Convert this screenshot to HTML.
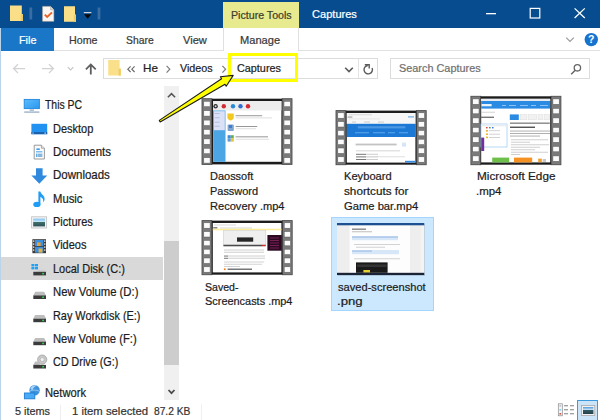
<!DOCTYPE html>
<html><head><meta charset="utf-8">
<style>
*{margin:0;padding:0;box-sizing:border-box}
html,body{width:600px;height:420px;overflow:hidden;background:#fff}
body{position:relative;font-family:"Liberation Sans",sans-serif;font-size:12.4px;color:#1a1a1a}
.a{position:absolute}
.t{position:absolute;white-space:nowrap;line-height:14px;height:14px;transform-origin:0 0;-webkit-text-stroke:.22px currentColor}
svg{position:absolute;overflow:visible}
</style></head><body>
<!-- title bar -->
<div class="a" style="left:0;top:0;width:600px;height:28px;background:#074c8f"></div>
<div class="a" style="left:223px;top:2.4px;width:76px;height:26px;background:#e7ea8e"></div>
<!-- ribbon tab row -->
<div class="a" style="left:0;top:28px;width:600px;height:23px;background:#fff;border-bottom:1px solid #e2e2e2"></div>
<div class="a" style="left:0;top:28px;width:54.4px;height:23.4px;background:#1a77c8"></div>
<div class="a" style="left:223px;top:28px;width:76px;height:23px;background:#fff;border-left:1px solid #e0e0e0;border-right:1px solid #e0e0e0"></div>
<!-- window side borders -->
<div class="a" style="left:0;top:28px;width:1px;height:392px;background:#b9d4ea"></div>

<svg style="left:0;top:0" width="600" height="28" viewBox="0 0 600 28">
 <!-- folder 1 -->
 <path d="M10 5.6H21.8V14H22.8V21H10Z" fill="#fbdf88"/>
 <path d="M20.6 14.4H22.8V21H20.6Z" fill="#efcb66"/>
 <rect x="29.4" y="7.5" width="2.8" height="12" fill="#3b6da3"/>
 <!-- doc -->
 <path d="M42.6 6.4H50.6L53.8 9.8V21.3H42.6Z" fill="#faf6f1" stroke="#d9b9a0" stroke-width=".5"/>
 <path d="M50.6 6.4V9.8H53.8" fill="#d8d8d8" stroke="#999" stroke-width=".5"/>
 <path d="M44.8 14.6L47.2 17L52 12.4" fill="none" stroke="#e8632b" stroke-width="1.9"/>
 <!-- folder 2 -->
 <path d="M64 6.2H75V14.6H76V21.8H64Z" fill="#fbdf88"/>
 <path d="M73.8 15H76V21.8H73.8Z" fill="#efcb66"/>
 <!-- dropdown -->
 <rect x="83.8" y="12" width="7.6" height="1.2" fill="#c9d3de"/>
 <path d="M84 14.2H91.4L87.7 18.8Z" fill="#0a0a0a"/>
 <rect x="97.6" y="7.5" width="2.8" height="12" fill="#3b6da3"/>
 <!-- window controls -->
 <rect x="486" y="13" width="10" height="1.3" fill="#fff"/>
 <rect x="530.2" y="8.4" width="9.6" height="9.6" fill="none" stroke="#fff" stroke-width="1.2"/>
 <path d="M574.6 8.4L584.8 18M584.8 8.4L574.6 18" stroke="#fff" stroke-width="1.3" fill="none"/>
</svg>
<svg style="left:560px;top:30px" width="40" height="20" viewBox="560 30 40 20">
 <path d="M566.2 37.6L570 41.4L573.8 37.6" fill="none" stroke="#9a9a9a" stroke-width="1.2"/>
 <circle cx="591.3" cy="39.6" r="6.7" fill="#1873cf"/>
 <text x="591.3" y="43.4" text-anchor="middle" font-family="Liberation Sans, sans-serif" font-weight="bold" font-size="10.5" fill="#fff">?</text>
</svg>

<!-- address bar -->
<div class="a" style="left:103px;top:58px;width:275px;height:21px;border:1px solid #dcdcdc;background:#fff"></div>
<div class="a" style="left:358.2px;top:58px;width:1px;height:20px;background:#e3e3e3"></div>
<div class="a" style="left:389.6px;top:58px;width:200.6px;height:21px;border:1px solid #dcdcdc;background:#fff"></div>

<svg style="left:0;top:52px" width="600" height="34" viewBox="0 52 600 34">
 <!-- back -->
 <path d="M25 68.6H13.6M18 64.2L13.6 68.6L18 73" fill="none" stroke="#d2d2d2" stroke-width="1.3"/>
 <!-- fwd -->
 <path d="M42 68.6H53.4M49 64.2L53.4 68.6L49 73" fill="none" stroke="#d2d2d2" stroke-width="1.3"/>
 <!-- small chevron -->
 <path d="M67.8 67.2L70.6 70L73.4 67.2" fill="none" stroke="#c4c4c4" stroke-width="1.1"/>
 <!-- up -->
 <path d="M90.8 74.4V64.6M85.9 69.3L90.8 64.4L95.7 69.3" fill="none" stroke="#5e5e5e" stroke-width="1.8"/>
 <!-- folder in address -->
 <path d="M108.2 60H119.6V68.4H120.8V75.6H108.2Z" fill="#fbe08c"/>
 <path d="M118.6 68.8H120.8V75.6H118.6Z" fill="#efcb66"/>
 <!-- « -->
 <path d="M130.6 66.4L127.8 69.2L130.6 72M134.6 66.4L131.8 69.2L134.6 72" fill="none" stroke="#666" stroke-width="1.1"/>
 <!-- > -->
 <path d="M166.6 65.8L169.8 69.2L166.6 72.6" fill="none" stroke="#7a7a7a" stroke-width="1.2"/>
 <path d="M222.4 65.8L225.6 69.2L222.4 72.6" fill="none" stroke="#7a7a7a" stroke-width="1.2"/>
 <!-- dropdown chevron -->
 <path d="M345.2 67.8L349 71.6L352.8 67.8" fill="none" stroke="#5a5a5a" stroke-width="1.6"/>
 <!-- refresh -->
 <path d="M367.8 65.5A4.2 4.2 0 1 0 372.1 68" fill="none" stroke="#5a5a5a" stroke-width="1.4"/>
 <path d="M364.8 64.8H369.2V68.4" fill="none" stroke="#5a5a5a" stroke-width="1.4"/>
 <!-- search -->
 <circle cx="577.4" cy="67.8" r="3.2" fill="none" stroke="#666" stroke-width="1.3"/>
 <path d="M575.2 70.2L571.2 74.2" stroke="#666" stroke-width="1.5"/>
</svg>

<!-- nav pane -->
<div class="a" style="left:1px;top:257px;width:162px;height:23.4px;background:#d9d9d9"></div>
<div class="a" style="left:164px;top:86px;width:15.3px;height:313.6px;background:#f0f0f0"></div>
<div class="a" style="left:164px;top:241px;width:15.3px;height:123.6px;background:#cdcdcd"></div>

<svg style="left:0;top:90px" width="60" height="320" viewBox="0 90 60 320">
 <defs>
  <linearGradient id="gm" x1="0" y1="0" x2="1" y2="1"><stop offset="0" stop-color="#5cbcff"/><stop offset="1" stop-color="#2a97ee"/></linearGradient>
  <linearGradient id="gp" x1="0" y1="0" x2="0" y2="1"><stop offset="0" stop-color="#7cc4f5"/><stop offset=".45" stop-color="#cfe7f5"/><stop offset=".5" stop-color="#3f6d68"/><stop offset="1" stop-color="#2e5058"/></linearGradient>
 </defs>
 <!-- This PC -->
 <rect x="24.2" y="99.4" width="15.2" height="9.2" fill="url(#gm)" stroke="#2487dc" stroke-width=".9"/>
 <rect x="29.6" y="109.2" width="4.4" height="1.8" fill="#b5c3d0"/>
 <rect x="24.2" y="111.4" width="15.2" height="1.4" fill="#9db3c8"/>
 <!-- Desktop -->
 <rect x="31.4" y="123.8" width="15.8" height="10.4" fill="#2292f2"/>
 <rect x="31.4" y="132" width="15.8" height="2.2" fill="#1b62ad"/>
 <rect x="32.4" y="132.6" width="1.2" height="1" fill="#d8e8f8"/><rect x="44.4" y="132.6" width="1.6" height="1" fill="#d8e8f8"/>
 <!-- Documents -->
 <path d="M34.2 145.2H41.4L44.4 148.2V159H34.2Z" fill="#fcfcfc" stroke="#8f8f8f" stroke-width=".9"/>
 <path d="M41.4 145.2V148.2H44.4" fill="#e4e4e4" stroke="#8f8f8f" stroke-width=".7"/>
 <rect x="36.4" y="148.4" width="3.4" height="1.6" fill="#3e9be6"/>
 <rect x="36" y="151.2" width="6.4" height="1.2" fill="#5aaef0"/>
 <rect x="37.4" y="153.6" width="5" height="3.4" fill="#8ab6d8"/>
 <rect x="36" y="153.6" width="1" height="3.4" fill="#5aaef0"/>
 <!-- Downloads -->
 <path d="M36 168.2H42.6V175.6H47.2L39.3 183.8L31.4 175.6H36Z" fill="#2f89dd"/>
 <!-- Music -->
 <path d="M38.4 191.6H40.4C40.8 194.4 44.8 195.6 44.6 199.2C44.5 200.6 43.8 201.6 43 202.2C43.6 200.4 43.2 198.2 40.4 196.8V204.4H38.4Z" fill="#1f9cf5"/>
 <ellipse cx="36.9" cy="204.4" rx="3.6" ry="2.7" fill="#1f9cf5"/>
 <!-- Pictures -->
 <rect x="31.6" y="216.8" width="15" height="11.2" fill="#f4f4f4" stroke="#c4c4c4" stroke-width=".9"/>
 <rect x="33.2" y="218.6" width="11.8" height="7.8" fill="url(#gp)"/>
 <!-- Videos -->
 <rect x="32.4" y="239.2" width="13.6" height="14" fill="#3a3a3a"/>
 <rect x="35" y="240" width="8.4" height="6" fill="#3b8fe0"/>
 <rect x="35" y="246.8" width="8.4" height="5.8" fill="#3b8fe0"/>
 <rect x="37" y="242.4" width="3.6" height="3.6" fill="#f0a030"/>
 <rect x="38.6" y="248.6" width="3.8" height="4" fill="#e8b040"/>
 <g fill="#e8e8e8"><rect x="33" y="240.4" width="1.3" height="1.4"/><rect x="33" y="243.4" width="1.3" height="1.4"/><rect x="33" y="246.4" width="1.3" height="1.4"/><rect x="33" y="249.4" width="1.3" height="1.4"/>
 <rect x="44.1" y="240.4" width="1.3" height="1.4"/><rect x="44.1" y="243.4" width="1.3" height="1.4"/><rect x="44.1" y="246.4" width="1.3" height="1.4"/><rect x="44.1" y="249.4" width="1.3" height="1.4"/></g>
 <!-- Local disk -->
 <g fill="#1fa2f6"><rect x="31.4" y="264" width="3" height="2.4"/><rect x="35" y="264" width="3" height="2.4"/><rect x="31.4" y="267" width="3" height="2.4"/><rect x="35" y="267" width="3" height="2.4"/></g>
 <path d="M38.6 269.8H44.4L46 271.8H36Z" fill="#cfcfcf"/>
 <rect x="33.3" y="271.8" width="12.7" height="3.6" fill="#3b3b3b"/>
 <rect x="42.2" y="272.9" width="1.8" height="1.5" fill="#35d04a"/>

 <path d="M35.2 291.79999999999995H44.2L46 295.4H33.3Z" fill="#bdbdbd"/>
 <rect x="33.3" y="295.4" width="12.7" height="3.6" fill="#3b3b3b"/>
 <rect x="42.2" y="296.5" width="1.8" height="1.5" fill="#35d04a"/>
 <path d="M35.2 315.0H44.2L46 318.6H33.3Z" fill="#bdbdbd"/>
 <rect x="33.3" y="318.6" width="12.7" height="3.6" fill="#3b3b3b"/>
 <rect x="42.2" y="319.70000000000005" width="1.8" height="1.5" fill="#35d04a"/>
 <path d="M35.2 338.0H44.2L46 341.6H33.3Z" fill="#bdbdbd"/>
 <rect x="33.3" y="341.6" width="12.7" height="3.6" fill="#3b3b3b"/>
 <rect x="42.2" y="342.70000000000005" width="1.8" height="1.5" fill="#35d04a"/>
 <!-- CD -->
 <circle cx="42.2" cy="359.6" r="4.6" fill="#c9c9c9" stroke="#9a9a9a" stroke-width=".7"/>
 <circle cx="42.2" cy="359.6" r="2" fill="#f2f2f2" stroke="#a8a8a8" stroke-width=".6"/>
 <path d="M35.2 361.6H39L40 364.9H33.3Z" fill="#bdbdbd"/>
 <rect x="33.3" y="364.9" width="12.7" height="3.6" fill="#3b3b3b"/>
 <rect x="42.2" y="366" width="1.8" height="1.5" fill="#35d04a"/>
 <!-- Network -->
 <circle cx="34.6" cy="390.2" r="5.2" fill="#3f93dc"/>
 <path d="M30.4 388.4A5.2 5.2 0 0 1 37 385.6C35 386.4 33 388 32.4 390.4Z" fill="#a8d4f6"/>
 <path d="M30 391C33 389.6 36.6 389.8 39.6 391.4" stroke="#9fd0f6" stroke-width=".8" fill="none"/>
 <rect x="24.4" y="393" width="10.4" height="5.8" fill="#49aaf5" stroke="#1f7ed2" stroke-width=".9"/>
</svg>
<!-- scroll chevrons -->
<svg style="left:164px;top:86px" width="16" height="314" viewBox="164 86 16 314">
 <path d="M167.9 97.2L171.5 93.6L175.1 97.2" fill="none" stroke="#555" stroke-width="1.6"/>
 <path d="M168.5 390L171.5 393.2L174.5 390" fill="none" stroke="#4a4a4a" stroke-width="1.7"/>
</svg>

<!-- status -->
<div class="a" style="left:60.4px;top:405px;width:1px;height:15px;background:#eeeeee"></div>
<div class="a" style="left:201px;top:404px;width:1px;height:16px;background:#f0f0f0"></div>

<div class="a" style="left:576.6px;top:399.6px;width:21.6px;height:21px;background:#cce4f7;border:1px solid #3c9bdc"></div>
<svg style="left:555px;top:400px" width="45" height="20" viewBox="555 400 45 20">
 <defs><linearGradient id="gv" x1="0" y1="0" x2="0" y2="1"><stop offset="0" stop-color="#4d9ae0"/><stop offset=".4" stop-color="#cfe3f2"/><stop offset=".5" stop-color="#2f5a62"/><stop offset="1" stop-color="#23404a"/></linearGradient></defs>
 <rect x="558.3" y="403.8" width="4" height="12" fill="#f6f6f6" stroke="#8a8a8a" stroke-width=".7"/>
 <rect x="559.4" y="405" width="1.8" height="1.6" fill="#b8c4d0"/><rect x="559.4" y="409" width="1.8" height="1.6" fill="#8ad0f5"/><rect x="559.4" y="413" width="1.8" height="1.6" fill="#e05050"/>
 <g fill="#8c8c8c"><rect x="564" y="405.2" width="4" height="1.1"/><rect x="570" y="405.2" width="4" height="1.1"/><rect x="564" y="409.2" width="4" height="1.1"/><rect x="570" y="409.2" width="4" height="1.1"/><rect x="564" y="413.2" width="4" height="1.1"/><rect x="570" y="413.2" width="4" height="1.1"/></g>
 <rect x="581.6" y="405.6" width="13.2" height="9.8" fill="#f2f2f2" stroke="#a0a0a0" stroke-width=".7"/>
 <rect x="583" y="407" width="10.4" height="7" fill="url(#gv)"/>
</svg>

<!-- files -->
<div class="a" style="left:331px;top:217px;width:103px;height:94px;background:#cce8ff;border:1px solid #a3d5ff"></div>
<svg style="left:0;top:0" width="600" height="420" viewBox="0 0 600 420"><rect x="202.0" y="98.7" width="9.8" height="65.7" fill="#7a7a7a"/>
<rect x="202.0" y="98.7" width="9.8" height="65.7" fill="none" stroke="#4d4d4d" stroke-width=".9"/>
<rect x="203.8" y="101.3" width="6.3" height="5.4" fill="#fbfbfb" stroke="#5a5a5a" stroke-width=".5"/>
<rect x="203.8" y="110.7" width="6.3" height="5.4" fill="#fbfbfb" stroke="#5a5a5a" stroke-width=".5"/>
<rect x="203.8" y="120.1" width="6.3" height="5.4" fill="#fbfbfb" stroke="#5a5a5a" stroke-width=".5"/>
<rect x="203.8" y="129.5" width="6.3" height="5.4" fill="#fbfbfb" stroke="#5a5a5a" stroke-width=".5"/>
<rect x="203.8" y="138.9" width="6.3" height="5.4" fill="#fbfbfb" stroke="#5a5a5a" stroke-width=".5"/>
<rect x="203.8" y="148.3" width="6.3" height="5.4" fill="#fbfbfb" stroke="#5a5a5a" stroke-width=".5"/>
<rect x="203.8" y="157.7" width="6.3" height="5.4" fill="#fbfbfb" stroke="#5a5a5a" stroke-width=".5"/>
<rect x="282.2" y="98.7" width="9.8" height="65.7" fill="#7a7a7a"/>
<rect x="282.2" y="98.7" width="9.8" height="65.7" fill="none" stroke="#4d4d4d" stroke-width=".9"/>
<rect x="284.0" y="101.3" width="6.3" height="5.4" fill="#fbfbfb" stroke="#5a5a5a" stroke-width=".5"/>
<rect x="284.0" y="110.7" width="6.3" height="5.4" fill="#fbfbfb" stroke="#5a5a5a" stroke-width=".5"/>
<rect x="284.0" y="120.1" width="6.3" height="5.4" fill="#fbfbfb" stroke="#5a5a5a" stroke-width=".5"/>
<rect x="284.0" y="129.5" width="6.3" height="5.4" fill="#fbfbfb" stroke="#5a5a5a" stroke-width=".5"/>
<rect x="284.0" y="138.9" width="6.3" height="5.4" fill="#fbfbfb" stroke="#5a5a5a" stroke-width=".5"/>
<rect x="284.0" y="148.3" width="6.3" height="5.4" fill="#fbfbfb" stroke="#5a5a5a" stroke-width=".5"/>
<rect x="284.0" y="157.7" width="6.3" height="5.4" fill="#fbfbfb" stroke="#5a5a5a" stroke-width=".5"/>
<rect x="211.8" y="98.7" width="70.4" height="65.7" fill="#1c1c1c"/>
<rect x="213.2" y="101" width="68.2" height="60.8" fill="#fff"/>
<rect x="213.2" y="101" width="68.2" height="9.5" fill="#ededed"/>
<circle cx="215.6" cy="106.2" r="2.2" fill="#2c2c2c"/>
<circle cx="223.8" cy="106.2" r="2.2" fill="#d42a36"/>
<circle cx="233" cy="106.2" r="2.2" fill="#2b8ad6"/>
<circle cx="240.5" cy="106.2" r="2.2" fill="#2d6fd2"/>
<circle cx="248" cy="106.2" r="2.2" fill="#d42a36"/>
<circle cx="215.6" cy="106.2" r="1" fill="#d8d8d8"/>
<rect x="213.2" y="110.5" width="12.3" height="51.3" fill="#4ba6e3"/>
<rect x="214" y="111.2" width="10.8" height="19" fill="#dbe1f6"/>
<rect x="214.6" y="113" width="5.0" height="0.8" fill="#a4b6dc"/>
<rect x="214.6" y="117.4" width="5.0" height="0.8" fill="#a4b6dc"/>
<rect x="214.6" y="121.8" width="5.0" height="0.8" fill="#a4b6dc"/>
<rect x="214.6" y="125.8" width="5.0" height="0.8" fill="#a4b6dc"/>
<path d="M227.4 113.4H233.8V117.4C233.8 119.2 231.8 120.2 230.6 120.4C229.4 120.2 227.4 119.2 227.4 117.4Z" fill="#f2c824"/>
<rect x="235.6" y="115.3" width="26.6" height="0.9" fill="#8c8c8c"/>
<rect x="235.6" y="117.5" width="36.4" height="0.8" fill="#d6d6d6"/>
<rect x="227.6" y="124.4" width="6.2" height="6.6" rx="1" fill="#7fa4cf"/>
<rect x="229" y="125" width="3" height="3" fill="#3f7fd0"/>
<rect x="235.6" y="126.1" width="21.6" height="0.9" fill="#8c8c8c"/>
<rect x="235.6" y="128.4" width="20.4" height="0.8" fill="#d6d6d6"/>
<rect x="227.6" y="135.2" width="3.2" height="3.2" fill="#3f8ade"/><rect x="230.8" y="135.2" width="3" height="3.2" fill="#6ab04a"/><rect x="227.6" y="138.4" width="3.2" height="3.2" fill="#5a9ad8"/><rect x="230.8" y="138.4" width="3" height="3.2" fill="#eac232"/>
<rect x="235.6" y="136.4" width="32.4" height="0.9" fill="#8c8c8c"/>
<rect x="235.6" y="138.8" width="33.4" height="0.8" fill="#d6d6d6"/>
<rect x="336.0" y="110.6" width="9.8" height="54.1" fill="#7a7a7a"/>
<rect x="336.0" y="110.6" width="9.8" height="54.1" fill="none" stroke="#4d4d4d" stroke-width=".9"/>
<rect x="337.8" y="112.8" width="6.3" height="5.4" fill="#fbfbfb" stroke="#5a5a5a" stroke-width=".5"/>
<rect x="337.8" y="121.6" width="6.3" height="5.4" fill="#fbfbfb" stroke="#5a5a5a" stroke-width=".5"/>
<rect x="337.8" y="130.4" width="6.3" height="5.4" fill="#fbfbfb" stroke="#5a5a5a" stroke-width=".5"/>
<rect x="337.8" y="139.2" width="6.3" height="5.4" fill="#fbfbfb" stroke="#5a5a5a" stroke-width=".5"/>
<rect x="337.8" y="148.0" width="6.3" height="5.4" fill="#fbfbfb" stroke="#5a5a5a" stroke-width=".5"/>
<rect x="337.8" y="156.8" width="6.3" height="5.4" fill="#fbfbfb" stroke="#5a5a5a" stroke-width=".5"/>
<rect x="416.4" y="110.6" width="9.8" height="54.1" fill="#7a7a7a"/>
<rect x="416.4" y="110.6" width="9.8" height="54.1" fill="none" stroke="#4d4d4d" stroke-width=".9"/>
<rect x="418.2" y="112.8" width="6.3" height="5.4" fill="#fbfbfb" stroke="#5a5a5a" stroke-width=".5"/>
<rect x="418.2" y="121.6" width="6.3" height="5.4" fill="#fbfbfb" stroke="#5a5a5a" stroke-width=".5"/>
<rect x="418.2" y="130.4" width="6.3" height="5.4" fill="#fbfbfb" stroke="#5a5a5a" stroke-width=".5"/>
<rect x="418.2" y="139.2" width="6.3" height="5.4" fill="#fbfbfb" stroke="#5a5a5a" stroke-width=".5"/>
<rect x="418.2" y="148.0" width="6.3" height="5.4" fill="#fbfbfb" stroke="#5a5a5a" stroke-width=".5"/>
<rect x="418.2" y="156.8" width="6.3" height="5.4" fill="#fbfbfb" stroke="#5a5a5a" stroke-width=".5"/>
<rect x="345.8" y="110.6" width="70.6" height="54.1" fill="#1c1c1c"/>
<rect x="346.8" y="113" width="68.6" height="49.6" fill="#fff"/>
<rect x="346.8" y="113" width="68.6" height="11" fill="#f6f6f6"/>
<rect x="349" y="114.4" width="23.0" height="0.8" fill="#d0d0d0"/>
<rect x="347.6" y="116.6" width="4.8" height="0.9" fill="#8a8a8a"/>
<rect x="408" y="116.4" width="6.0" height="1" fill="#5a9ae0"/>
<rect x="349" y="118.6" width="31.0" height="0.7" fill="#dcdcdc"/>
<rect x="352" y="121.6" width="4.0" height="0.9" fill="#c8c8c8"/>
<rect x="364" y="121.6" width="6.0" height="0.9" fill="#c8c8c8"/>
<rect x="378" y="121.6" width="6.0" height="0.9" fill="#c8c8c8"/>
<rect x="346.8" y="123.8" width="68.6" height="13.2" fill="#1b78d4"/>
<rect x="357.8" y="126.2" width="47.6" height="2.2" fill="#4c98e4"/>
<rect x="355" y="132.2" width="14.0" height="1.1" fill="#5aa4ea"/>
<rect x="373" y="132.2" width="12.0" height="1.1" fill="#5aa4ea"/>
<rect x="388" y="132.2" width="7.0" height="1.1" fill="#5aa4ea"/>
<rect x="399" y="132.2" width="9.0" height="1.1" fill="#5aa4ea"/>
<rect x="355.6" y="143.6" width="41.0" height="1.8" fill="#c2c2c2"/>
<rect x="402" y="142.6" width="4" height="4" fill="#d4e6f8"/>
<rect x="356" y="150.4" width="44.0" height="0.9" fill="#d0d0d0"/>
<rect x="356" y="153.8" width="10.0" height="1" fill="#777"/>
<rect x="366" y="153.8" width="12.0" height="0.9" fill="#c8c8c8"/>
<rect x="356" y="156.4" width="10.0" height="1" fill="#777"/>
<rect x="366" y="156.4" width="12.0" height="0.9" fill="#c8c8c8"/>
<rect x="356" y="159" width="10.0" height="1" fill="#777"/>
<rect x="366" y="159" width="12.0" height="0.9" fill="#c8c8c8"/>
<rect x="366" y="156.4" width="39.0" height="0.8" fill="#d8d8d8"/>
<rect x="405" y="160.8" width="10.8" height="1.8" fill="#3a8ae0"/>
<rect x="470.9" y="96.3" width="9.8" height="68.4" fill="#7a7a7a"/>
<rect x="470.9" y="96.3" width="9.8" height="68.4" fill="none" stroke="#4d4d4d" stroke-width=".9"/>
<rect x="472.7" y="98.9" width="6.3" height="5.4" fill="#fbfbfb" stroke="#5a5a5a" stroke-width=".5"/>
<rect x="472.7" y="108.4" width="6.3" height="5.4" fill="#fbfbfb" stroke="#5a5a5a" stroke-width=".5"/>
<rect x="472.7" y="117.9" width="6.3" height="5.4" fill="#fbfbfb" stroke="#5a5a5a" stroke-width=".5"/>
<rect x="472.7" y="127.4" width="6.3" height="5.4" fill="#fbfbfb" stroke="#5a5a5a" stroke-width=".5"/>
<rect x="472.7" y="136.9" width="6.3" height="5.4" fill="#fbfbfb" stroke="#5a5a5a" stroke-width=".5"/>
<rect x="472.7" y="146.4" width="6.3" height="5.4" fill="#fbfbfb" stroke="#5a5a5a" stroke-width=".5"/>
<rect x="472.7" y="155.9" width="6.3" height="5.4" fill="#fbfbfb" stroke="#5a5a5a" stroke-width=".5"/>
<rect x="551.1" y="96.3" width="9.8" height="68.4" fill="#7a7a7a"/>
<rect x="551.1" y="96.3" width="9.8" height="68.4" fill="none" stroke="#4d4d4d" stroke-width=".9"/>
<rect x="552.9" y="98.9" width="6.3" height="5.4" fill="#fbfbfb" stroke="#5a5a5a" stroke-width=".5"/>
<rect x="552.9" y="108.4" width="6.3" height="5.4" fill="#fbfbfb" stroke="#5a5a5a" stroke-width=".5"/>
<rect x="552.9" y="117.9" width="6.3" height="5.4" fill="#fbfbfb" stroke="#5a5a5a" stroke-width=".5"/>
<rect x="552.9" y="127.4" width="6.3" height="5.4" fill="#fbfbfb" stroke="#5a5a5a" stroke-width=".5"/>
<rect x="552.9" y="136.9" width="6.3" height="5.4" fill="#fbfbfb" stroke="#5a5a5a" stroke-width=".5"/>
<rect x="552.9" y="146.4" width="6.3" height="5.4" fill="#fbfbfb" stroke="#5a5a5a" stroke-width=".5"/>
<rect x="552.9" y="155.9" width="6.3" height="5.4" fill="#fbfbfb" stroke="#5a5a5a" stroke-width=".5"/>
<rect x="480.7" y="96.3" width="70.4" height="68.4" fill="#1c1c1c"/>
<rect x="481.2" y="98.8" width="69" height="63.6" fill="#fff"/>
<rect x="481.2" y="98.8" width="69" height="2.2" fill="#e8ecf0"/>
<rect x="481.2" y="101" width="69" height="7.6" fill="#2b8be2"/>
<rect x="481.6" y="104" width="10.0" height="2.3" fill="#e8f2fc"/>
<rect x="502" y="105" width="4.0" height="1" fill="#8cc2f4"/>
<rect x="509" y="105" width="7.0" height="1" fill="#8cc2f4"/>
<rect x="520" y="105" width="8.0" height="1" fill="#8cc2f4"/>
<rect x="531" y="105" width="5.0" height="1" fill="#8cc2f4"/>
<rect x="540" y="105" width="8.0" height="1" fill="#8cc2f4"/>
<rect x="481" y="111.8" width="14.0" height="0.8" fill="#c8c8c8"/>
<rect x="481" y="116.6" width="13.0" height="1.4" fill="#777"/>
<rect x="509.8" y="114.4" width="9" height="5.6" fill="#2b8be2"/>
<rect x="520.4" y="114.6" width="6.6" height="5.2" fill="#f1f1f1" stroke="#ddd" stroke-width=".5"/>
<rect x="528.6" y="114.6" width="8.0" height="5.2" fill="#f1f1f1" stroke="#ddd" stroke-width=".5"/>
<rect x="538" y="114.6" width="5.0" height="5.2" fill="#f1f1f1" stroke="#ddd" stroke-width=".5"/>
<rect x="544.6" y="114.6" width="5.0" height="5.2" fill="#f1f1f1" stroke="#ddd" stroke-width=".5"/>
<rect x="510" y="122.6" width="39.8" height="1.1" fill="#666"/>
<rect x="510" y="126.6" width="25.0" height="1.3" fill="#444"/>
<rect x="510" y="130.6" width="40.0" height="0.9" fill="#a8a8a8"/>
<rect x="510" y="133" width="40.0" height="0.9" fill="#a8a8a8"/>
<rect x="510" y="135.6" width="30.0" height="0.9" fill="#a8a8a8"/>
<rect x="511" y="139.4" width="37.0" height="0.8" fill="#c4c4c4"/>
<rect x="511" y="141.8" width="19.0" height="0.8" fill="#c4c4c4"/>
<rect x="511" y="144.4" width="38.0" height="0.8" fill="#c4c4c4"/>
<rect x="511" y="146.8" width="29.0" height="0.8" fill="#c4c4c4"/>
<rect x="511" y="149.4" width="24.0" height="0.8" fill="#c4c4c4"/>
<rect x="511" y="151.8" width="37.0" height="0.8" fill="#c4c4c4"/>
<rect x="511" y="154" width="9.0" height="0.8" fill="#c4c4c4"/>
<rect x="481" y="124" width="26" height="23" fill="#fff" stroke="#a4ccf2" stroke-width=".8"/>
<rect x="481.4" y="124.4" width="25.2" height="2" fill="#e8eef6"/>
<rect x="486" y="127" width="1.6" height="1.4" fill="#e04040"/>
<rect x="489" y="127" width="1.6" height="1.4" fill="#40a040"/>
<rect x="492" y="127" width="1.6" height="1.4" fill="#4080e0"/>
<rect x="486" y="130" width="2" height="1.6" fill="#e8b830"/>
<rect x="489" y="130.4" width="11.0" height="0.7" fill="#c0c0c0"/>
<rect x="486" y="133.4" width="2" height="1.6" fill="#e8b830"/>
<rect x="489" y="133.8" width="11.0" height="0.7" fill="#c0c0c0"/>
<rect x="486" y="136.6" width="2" height="1.6" fill="#e8b830"/>
<rect x="489" y="137.0" width="11.0" height="0.7" fill="#c0c0c0"/>
<rect x="481.2" y="137.6" width="3" height="13.4" fill="#7030a0"/>
<rect x="492.2" y="157.6" width="17" height="4.8" fill="#6cc04a"/>
<rect x="514" y="157.6" width="18.2" height="4.8" fill="#f59120"/>
<rect x="538.2" y="158.6" width="3.6" height="3.6" fill="#f0a030"/>
<rect x="542.6" y="159" width="3.4" height="3" fill="#c8c8c8"/>
<rect x="202.0" y="220.6" width="9.8" height="54.1" fill="#7a7a7a"/>
<rect x="202.0" y="220.6" width="9.8" height="54.1" fill="none" stroke="#4d4d4d" stroke-width=".9"/>
<rect x="203.8" y="222.8" width="6.3" height="5.4" fill="#fbfbfb" stroke="#5a5a5a" stroke-width=".5"/>
<rect x="203.8" y="231.6" width="6.3" height="5.4" fill="#fbfbfb" stroke="#5a5a5a" stroke-width=".5"/>
<rect x="203.8" y="240.4" width="6.3" height="5.4" fill="#fbfbfb" stroke="#5a5a5a" stroke-width=".5"/>
<rect x="203.8" y="249.2" width="6.3" height="5.4" fill="#fbfbfb" stroke="#5a5a5a" stroke-width=".5"/>
<rect x="203.8" y="258.0" width="6.3" height="5.4" fill="#fbfbfb" stroke="#5a5a5a" stroke-width=".5"/>
<rect x="203.8" y="266.8" width="6.3" height="5.4" fill="#fbfbfb" stroke="#5a5a5a" stroke-width=".5"/>
<rect x="282.4" y="220.6" width="9.8" height="54.1" fill="#7a7a7a"/>
<rect x="282.4" y="220.6" width="9.8" height="54.1" fill="none" stroke="#4d4d4d" stroke-width=".9"/>
<rect x="284.2" y="222.8" width="6.3" height="5.4" fill="#fbfbfb" stroke="#5a5a5a" stroke-width=".5"/>
<rect x="284.2" y="231.6" width="6.3" height="5.4" fill="#fbfbfb" stroke="#5a5a5a" stroke-width=".5"/>
<rect x="284.2" y="240.4" width="6.3" height="5.4" fill="#fbfbfb" stroke="#5a5a5a" stroke-width=".5"/>
<rect x="284.2" y="249.2" width="6.3" height="5.4" fill="#fbfbfb" stroke="#5a5a5a" stroke-width=".5"/>
<rect x="284.2" y="258.0" width="6.3" height="5.4" fill="#fbfbfb" stroke="#5a5a5a" stroke-width=".5"/>
<rect x="284.2" y="266.8" width="6.3" height="5.4" fill="#fbfbfb" stroke="#5a5a5a" stroke-width=".5"/>
<rect x="211.8" y="220.6" width="70.6" height="54.1" fill="#1c1c1c"/>
<rect x="212.8" y="223" width="68.6" height="49.4" fill="#fff"/>
<rect x="214" y="224.6" width="22.0" height="0.8" fill="#d0d0d0"/>
<rect x="213.2" y="227.2" width="4.2" height="1.3" fill="#666"/>
<rect x="220" y="227.6" width="32.0" height="0.8" fill="#c8c8c8"/>
<rect x="212.8" y="228.7" width="68.6" height="1.6" fill="#fbec9c"/>
<rect x="223.4" y="230.6" width="42.4" height="14.2" fill="#efefef" stroke="#cfcfcf" stroke-width=".6"/>
<rect x="237" y="237.4" width="16.2" height="4.3" fill="#262626"/>
<rect x="223.4" y="244.8" width="38.6" height="1.5" fill="#4a4a4a"/>
<rect x="262" y="244.8" width="3.8" height="1.5" fill="#d03030"/>
<rect x="267.4" y="235" width="14.4" height="15.7" fill="#2b0b22"/>
<rect x="270" y="237.6" width="9.0" height="0.8" fill="#8a2560"/>
<rect x="270" y="240" width="9.0" height="0.8" fill="#8a2560"/>
<rect x="270" y="242.6" width="9.0" height="0.8" fill="#8a2560"/>
<rect x="270" y="245" width="9.0" height="0.8" fill="#8a2560"/>
<rect x="270" y="247.6" width="9.0" height="0.8" fill="#8a2560"/>
<rect x="224" y="249.6" width="40.0" height="0.8" fill="#c4c4c4"/>
<rect x="224" y="251.8" width="40.0" height="0.8" fill="#c4c4c4"/>
<rect x="224" y="255.6" width="4.0" height="0.9" fill="#666"/>
<rect x="228" y="255.6" width="37.0" height="0.8" fill="#c4c4c4"/>
<rect x="224" y="257.8" width="4.0" height="0.9" fill="#666"/>
<rect x="228" y="257.8" width="37.0" height="0.8" fill="#c4c4c4"/>
<rect x="224" y="261.6" width="40.0" height="0.8" fill="#c8c8c8"/>
<rect x="224" y="263.8" width="38.0" height="0.8" fill="#c8c8c8"/>
<rect x="224" y="266" width="16.0" height="0.8" fill="#c8c8c8"/>
<circle cx="224.8" cy="269.2" r="1" fill="#f08020"/>
<rect x="227.6" y="268.6" width="24.4" height="1.2" fill="#555"/>
<rect x="337.6" y="223.8" width="87.4" height="52" fill="#000" opacity=".18"/>
<rect x="337" y="223" width="87.2" height="52" fill="#eeeeee"/>
<rect x="349.6" y="225" width="60.4" height="48" fill="#fdfdfd"/>
<rect x="420.8" y="225" width="3.4" height="48" fill="#f4f4f4"/>
<rect x="337" y="223" width="87.2" height="2.3" fill="#1d4f91"/>
<rect x="337" y="272.8" width="87.2" height="2.2" fill="#1b2436"/>
<rect x="352" y="228.6" width="14.0" height="1.1" fill="#666"/>
<rect x="352" y="231.4" width="20.0" height="0.8" fill="#b0b0b0"/>
<rect x="352" y="236" width="46" height="4.2" fill="#d8e7f8"/>
<rect x="352" y="236.6" width="46.0" height="0.9" fill="#8fb4e2"/>
<rect x="354" y="244" width="46.0" height="0.8" fill="#c8c8c8"/>
<rect x="356" y="246.8" width="29.0" height="0.8" fill="#c8c8c8"/>
<rect x="352" y="250" width="47" height="4.2" fill="#d8e7f8"/>
<rect x="352" y="250.6" width="20.0" height="0.9" fill="#8fb4e2"/>
<rect x="354" y="258.4" width="46.0" height="0.8" fill="#c8c8c8"/>
<rect x="356" y="262.4" width="31.6" height="10.4" fill="#1a1a1a"/>
<rect x="357" y="264.4" width="29.6" height="2.6" fill="#343434"/>
<rect x="363.4" y="270" width="6.6" height="2.4" fill="#e6d030"/></svg>
<div class="t" style="left:230.60px;top:8.22px;font-size:10.9px;color:#3d3d2c;transform:scaleX(0.9762);">Picture Tools</div>
<div class="t" style="left:19.00px;top:33.22px;font-size:10.9px;color:#ffffff;transform:scaleX(0.9948);">File</div>
<div class="t" style="left:69.00px;top:33.22px;font-size:10.9px;color:#3a3a3a;transform:scaleX(0.9795);">Home</div>
<div class="t" style="left:126.40px;top:33.22px;font-size:10.9px;color:#3a3a3a;transform:scaleX(0.9516);">Share</div>
<div class="t" style="left:183.00px;top:33.22px;font-size:10.9px;color:#3a3a3a;transform:scaleX(1.0194);">View</div>
<div class="t" style="left:240.40px;top:33.22px;font-size:10.9px;color:#3a3a3a;transform:scaleX(1.0178);">Manage</div>
<div class="t" style="left:312.40px;top:7.05px;font-size:11.4px;color:#ffffff;transform:scaleX(0.9716);">Captures</div>
<div class="t" style="left:143.00px;top:61.08px;font-size:11.3px;color:#222;transform:scaleX(1.0312);">He</div>
<div class="t" style="left:179.80px;top:61.08px;font-size:11.3px;color:#222;transform:scaleX(0.9513);">Videos</div>
<div class="t" style="left:236.75px;top:61.08px;font-size:11.3px;color:#222;transform:scaleX(0.9580);">Captures</div>
<div class="t" style="left:399.00px;top:61.08px;font-size:11.3px;color:#707070;transform:scaleX(0.9633);">Search Captures</div>
<div class="t" style="left:45.30px;top:97.81px;font-size:12.1px;color:#1c1c1c;transform:scaleX(0.8620);">This PC</div>
<div class="t" style="left:52.60px;top:121.81px;font-size:12.1px;color:#1c1c1c;transform:scaleX(0.9095);">Desktop</div>
<div class="t" style="left:52.60px;top:144.81px;font-size:12.1px;color:#1c1c1c;transform:scaleX(0.9490);">Documents</div>
<div class="t" style="left:52.60px;top:167.81px;font-size:12.1px;color:#1c1c1c;transform:scaleX(0.9501);">Downloads</div>
<div class="t" style="left:52.60px;top:191.81px;font-size:12.1px;color:#1c1c1c;transform:scaleX(0.9323);">Music</div>
<div class="t" style="left:52.60px;top:214.81px;font-size:12.1px;color:#1c1c1c;transform:scaleX(0.9120);">Pictures</div>
<div class="t" style="left:52.60px;top:237.81px;font-size:12.1px;color:#1c1c1c;transform:scaleX(0.9098);">Videos</div>
<div class="t" style="left:52.60px;top:261.81px;font-size:12.1px;color:#1c1c1c;transform:scaleX(0.9058);">Local Disk (C:)</div>
<div class="t" style="left:52.60px;top:284.81px;font-size:12.1px;color:#1c1c1c;transform:scaleX(0.9346);">New Volume (D:)</div>
<div class="t" style="left:52.60px;top:308.81px;font-size:12.1px;color:#1c1c1c;transform:scaleX(0.8993);">Ray Workdisk (E:)</div>
<div class="t" style="left:52.60px;top:331.81px;font-size:12.1px;color:#1c1c1c;transform:scaleX(0.9286);">New Volume (F:)</div>
<div class="t" style="left:52.60px;top:354.81px;font-size:12.1px;color:#1c1c1c;transform:scaleX(0.8907);">CD Drive (G:)</div>
<div class="t" style="left:45.30px;top:385.81px;font-size:12.1px;color:#1c1c1c;transform:scaleX(0.9248);">Network</div>
<div class="t" style="left:14.80px;top:403.98px;font-size:11.6px;color:#333;transform:scaleX(0.9369);">5 items</div>
<div class="t" style="left:72.00px;top:403.98px;font-size:11.6px;color:#333;transform:scaleX(0.9751);">1 item selected</div>
<div class="t" style="left:154.40px;top:403.98px;font-size:11.6px;color:#333;transform:scaleX(0.8815);">87.2 KB</div>
<div class="t" style="left:210.00px;top:168.95px;font-size:11.7px;color:#1c1c1c;transform:scaleX(0.9387);">Daossoft</div>
<div class="t" style="left:210.00px;top:183.95px;font-size:11.7px;color:#1c1c1c;transform:scaleX(0.9367);">Password</div>
<div class="t" style="left:210.00px;top:198.95px;font-size:11.7px;color:#1c1c1c;transform:scaleX(0.9482);">Recovery .mp4</div>
<div class="t" style="left:344.40px;top:168.95px;font-size:11.7px;color:#1c1c1c;transform:scaleX(0.9529);">Keyboard</div>
<div class="t" style="left:344.40px;top:183.95px;font-size:11.7px;color:#1c1c1c;transform:scaleX(1.0029);">shortcuts for</div>
<div class="t" style="left:344.40px;top:198.95px;font-size:11.7px;color:#1c1c1c;transform:scaleX(0.9588);">Game bar.mp4</div>
<div class="t" style="left:477.00px;top:168.95px;font-size:11.7px;color:#1c1c1c;transform:scaleX(1.0071);">Microsoft Edge</div>
<div class="t" style="left:476.02px;top:183.95px;font-size:11.7px;color:#1c1c1c;transform:scaleX(0.9810);">.mp4</div>
<div class="t" style="left:204.50px;top:279.95px;font-size:11.7px;color:#1c1c1c;transform:scaleX(0.9020);">Saved-</div>
<div class="t" style="left:204.50px;top:293.95px;font-size:11.7px;color:#1c1c1c;transform:scaleX(0.9347);">Screencasts .mp4</div>
<div class="t" style="left:338.00px;top:279.95px;font-size:11.7px;color:#1c1c1c;transform:scaleX(0.9505);">saved-screenshot</div>
<div class="t" style="left:336.87px;top:293.95px;font-size:11.7px;color:#1c1c1c;transform:scaleX(1.1296);">.png</div>

<div class="a" style="left:227.8px;top:52.8px;width:70px;height:29.7px;border:3px solid #ffff00"></div>
<svg style="left:0;top:0" width="600" height="420" viewBox="0 0 600 420">
 <path d="M160.2 121.9L159.3 120.4L221.6 78.7L220.4 76.8L233.2 75.4L226.2 86.2L225 84.3Z" fill="#ffff00" stroke="#1c1c1c" stroke-width="1.1" stroke-linejoin="round"/>
</svg>

</body></html>
